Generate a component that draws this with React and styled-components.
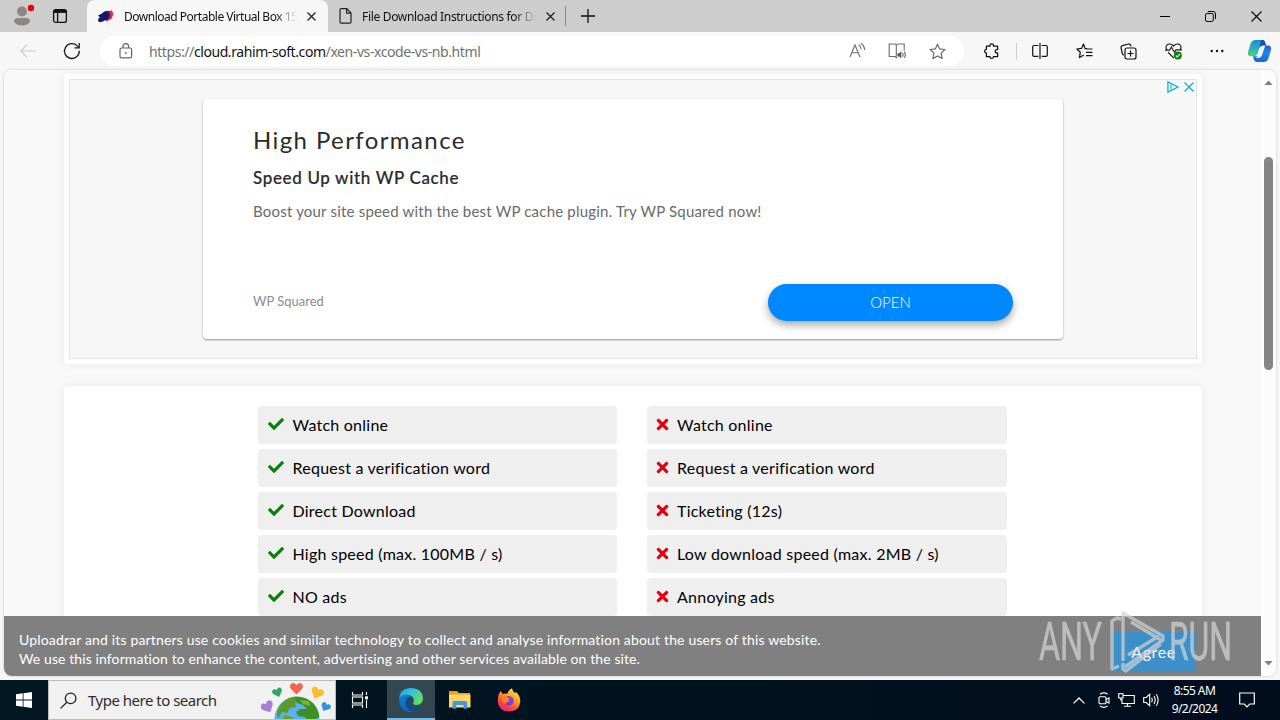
import React from 'react'
import styled, { createGlobalStyle } from 'styled-components'
import { FaCheck, FaTimes } from 'react-icons/fa'

const fast = [
    'Watch online',
    'Request a verification word',
    'Direct Download',
    'High speed (max. 100MB / s)',
    'NO ads',
]
const slow = [
    'Watch online',
    'Request a verification word',
    'Ticketing (12s)',
    'Low download speed (max. 2MB / s)',
    'Annoying ads',
]

function App() {
    return (
    <Desktop>
        <GlobalStyle />
        <TabBar />
        <Toolbar />
        <PageFrame>
            <Page>
                <AdCard />
                <CompareCard />
            </Page>
            <Scrollbar>
                <Arrow viewBox="0 0 10 6"><path d="M0 6L5 0.5L10 6Z" /></Arrow>
                <Thumb />
                <Arrow viewBox="0 0 10 6"><path d="M0 0L5 5.5L10 0Z" /></Arrow>
            </Scrollbar>
            <CookieBar />
        </PageFrame>
        <Taskbar />
    </Desktop>
    )
}

export default App

function TabBar() {
    return (
    <TabStrip>
        <StripIcons>
            <Icon $w={24} $h={24} viewBox="0 0 24 24">
                <circle cx="12" cy="7.5" r="5" fill="#8b8785" />
                <path d="M4 17.5Q4 14 8 14H16Q20 14 20 17.5Q18 21.5 12 21.5Q6 21.5 4 17.5Z" fill="#8b8785" />
                <circle cx="21" cy="4" r="3.2" fill="#e3000b" />
            </Icon>
            <Icon $w={16} $h={16} viewBox="0 0 16 16" fill="none" stroke="#111" strokeWidth="1.3">
                <rect x="1.6" y="1.6" width="12.8" height="12.8" rx="2.2" />
                <path d="M1.6 3.4H14.4" strokeWidth="3" />
                <path d="M5.6 4V14" />
            </Icon>
        </StripIcons>
        <Tab $active>
            <Icon $w={17} $h={15} viewBox="0 0 17 15">
                <path d="M9 2L15 1.5L16.5 5L14.5 10L9 12.5Z" fill="#e0303a" />
                <path d="M1 6.5Q3 5.5 5 4.5Q8 1 11.5 2.5Q13.5 4.5 12.5 8Q11 11.5 7.5 11.5Q4 14 1.5 12.5Q0 10 3 8.5Z" fill="#151574" />
            </Icon>
            <TabTitle $ls={-0.49}>Download Portable Virtual Box 15</TabTitle>
            <CloseIcon />
        </Tab>
        <Tab>
            <Icon $w={13} $h={16} viewBox="0 0 13 16" fill="none" stroke="#222" strokeWidth="1.2">
                <path d="M1 2Q1 .7 2.2 .7H7.8L12 5V14Q12 15.2 10.8 15.2H2.2Q1 15.2 1 14ZM7.6 .9V5.2H11.8" />
            </Icon>
            <TabTitle $ls={-0.32}>File Download Instructions for Do</TabTitle>
            <CloseIcon />
        </Tab>
        <NewTab>
            <Icon $w={14} $h={14} viewBox="0 0 14 14" stroke="#111" strokeWidth="1.3">
                <path d="M7 0V14M0 7H14" />
            </Icon>
        </NewTab>
        <WindowButtons>
            <Icon $w={10} $h={10} viewBox="0 0 10 10" stroke="#000"><path d="M0 5.5H10" /></Icon>
            <Icon $w={11} $h={11} viewBox="0 0 11 11" fill="none" stroke="#000">
                <rect x=".5" y="2.5" width="7.8" height="8" rx="1.6" />
                <path d="M2.8 .5H8Q10.5 .5 10.5 3V8" />
            </Icon>
            <Icon $w={11} $h={11} viewBox="0 0 11 11" stroke="#000" strokeWidth="1.1"><path d="M.5 .5L10.5 10.5M10.5 .5L.5 10.5" /></Icon>
        </WindowButtons>
    </TabStrip>
    )
}

function CloseIcon() {
    return (
        <Icon $w={9} $h={9} viewBox="0 0 9 9" stroke="#222" strokeWidth="1.3">
            <path d="M.5 .5L8.5 8.5M8.5 .5L.5 8.5" />
        </Icon>
    )
}

function Toolbar() {
    return (
    <Bar>
        <NavIcons>
            <Icon $w={16} $h={14} viewBox="0 0 16 14" fill="none" stroke="#cbcbcb" strokeWidth="1.2">
                <path d="M7 .7L.9 7L7 13.3M1 7H16" />
            </Icon>
            <Icon $w={18} $h={18} viewBox="0 0 18 18" fill="none" stroke="#1b1b1b" strokeWidth="1.3">
                <path d="M16.3 8.8A7.4 7.4 0 1 1 14.2 3.9L16 5.6" />
                <path d="M16.2 1V5.8H11.4" />
            </Icon>
        </NavIcons>
        <Address>
            <Icon $w={14} $h={17} viewBox="0 0 14 17" fill="none" stroke="#666" strokeWidth="1.2">
                <rect x="1" y="5" width="11.6" height="9.9" rx="1.6" />
                <path d="M4 5V3.4Q4 .6 6.8 .6Q9.6 .6 9.6 3.4V5" />
                <circle cx="6.8" cy="10" r=".9" fill="#666" stroke="none" />
            </Icon>
            <Url>https://<b>cloud.rahim-soft.com</b>/xen-vs-xcode-vs-nb.html</Url>
            <AddressIcons>
                <Icon $w={17} $h={16} viewBox="0 0 17 16" fill="none" stroke="#6b6b6b" strokeWidth="1.1">
                    <path d="M1 14L6 2L11 14M2.8 9.8H9.2" />
                    <path d="M9.8 1.7Q12 3.1 12.2 6.5M11.8 .3Q15.3 2.3 15.6 7" />
                </Icon>
                <Icon $w={19} $h={16} viewBox="0 0 19 16" fill="none" stroke="#6b6b6b" strokeWidth="1.1">
                    <path d="M8.3 13.6V2.2Q8 1 6.8 1H1.2V13.5H7L8.3 14.8L9.2 14M8.3 2.2Q8.7 1 10 1H16.2V7.5" />
                    <path d="M9.5 10.2H11.2L13.3 8V15.6L11.2 13.4H9.5Z" fill="#555" stroke="none" />
                    <path d="M14.6 9.8Q15.6 11.8 14.6 13.8M16.4 8.6Q18.3 11.8 16.4 15" />
                </Icon>
                <Icon $w={17} $h={17} viewBox="0 0 17 17" fill="none" stroke="#666" strokeWidth="1.15" strokeLinejoin="round">
                    <path d="M8.5 1.2L10.7 5.9L15.9 6.5L12.1 10.1L13.1 15.5L8.5 12.9L3.9 15.5L4.9 10.1L1.1 6.5L6.3 5.9Z" />
                </Icon>
            </AddressIcons>
        </Address>
        <Actions>
            <Icon $w={16} $h={16} viewBox="0 0 16 16" fill="none" stroke="#111" strokeWidth="1.25" strokeLinejoin="round">
                <path d="M2.4 5V3.2H6Q5.6 .9 7.7 .9Q9.8 .9 9.4 3.2H13.6V6.7Q11.2 6.3 11.2 8.3Q11.2 10.3 13.6 9.9V13.7H9.4Q9.6 15.3 7.7 15.3Q5.8 15.3 6 13.7H2.4V10.1Q.6 10 .6 8.1Q.6 6.4 2.4 6.3Z" />
            </Icon>
            <Rule />
            <Icon $w={16} $h={16} viewBox="0 0 16 16" fill="none" stroke="#111" strokeWidth="1.2">
                <path d="M6.3 2.5H2Q.7 2.5 .7 3.8V12Q.7 13.4 2 13.4H6.3M9.7 2.5H14Q15.3 2.5 15.3 3.8V12Q15.3 13.4 14 13.4H9.7M8 0V16" />
            </Icon>
            <Icon $w={17} $h={16} viewBox="0 0 17 16" fill="none" stroke="#111" strokeWidth="1.2" strokeLinejoin="round">
                <path d="M11 5.6L9 5.4L7.5 1L5.5 5.4L.8 6L4.3 9.3L3.4 14.6L7.8 12M10 6H16.5M10 9.3H16.5M10 12.6H16.5" />
            </Icon>
            <Icon $w={17} $h={17} viewBox="0 0 17 17" fill="none" stroke="#111" strokeWidth="1.2">
                <rect x="5" y="5" width="11" height="11" rx="2" />
                <path d="M10.5 7.5V13.5M7.5 10.5H13.5M3.8 12.2Q2.6 11.8 2.2 10L1 4.6Q.8 3 2.4 2.6L8.5 1Q10.5 .7 11.2 3.4" />
            </Icon>
            <Icon $w={18} $h={17} viewBox="0 0 18 17" fill="none" stroke="#222" strokeWidth="1.2">
                <path d="M2 7Q-.3 3.2 2.7 1.4Q6 .1 8.5 3Q11 .1 14.3 1.4Q17.3 3.2 15 7M0 7.2H4.6L6.4 4L9.4 9.2L11 6.8H17M3 9.3L8.8 15" />
                <circle cx="12.8" cy="12.4" r="4" fill="#107c10" stroke="none" />
                <path d="M10.8 12.5L12.2 14L15 11" stroke="#cfeacf" />
            </Icon>
            <Dots viewBox="0 0 14 4">
                <circle cx="1.7" cy="2" r="1.2" /><circle cx="7" cy="2" r="1.2" /><circle cx="12.3" cy="2" r="1.2" />
            </Dots>
            <Copilot />
        </Actions>
    </Bar>
    )
}

function Copilot() {
    return (
        <Icon $w={25} $h={24} viewBox="0 0 25 24">
            <defs>
                <linearGradient id="cpA" x1="0" y1="0" x2="0" y2="1">
                    <stop offset="0" stopColor="#1b8ad8" /><stop offset=".6" stopColor="#31b5b0" /><stop offset="1" stopColor="#52cf7c" />
                </linearGradient>
                <linearGradient id="cpB" x1="0" y1="0" x2="0" y2="1">
                    <stop offset="0" stopColor="#2a5fc9" /><stop offset=".5" stopColor="#1e87e5" /><stop offset="1" stopColor="#1b62dc" />
                </linearGradient>
            </defs>
            <path d="M8.5 1H15Q17.5 1 18.3 4L19 6.5H15.5Q13 6.5 12 10L10.6 14.5Q9.8 17.3 7 17.3H3.8Q.3 17.3 1 13L3.7 4.5Q5 1 8.5 1Z" fill="url(#cpA)" />
            <path d="M14 1H15.5Q17.7 1 18.4 4L19 6.5H15.5Q13.5 6.5 12.5 9Z" fill="#1d4fa8" />
            <path d="M17.5 6.5H21Q25 6.7 24 11L21.3 19.5Q20 23 16.7 23H10Q7.5 23 6.6 20L6 17.3H9Q12 17.3 13 14L14.5 9.2Q15.3 6.5 17.5 6.5Z" fill="url(#cpB)" />
            <path d="M15.3 6.7H18.2L14.8 16.6Q14 19 11.4 19H8.6Q11 18 12 14.8Z" fill="#eaf6ff" />
        </Icon>
    )
}

function AdCard() {
    return (
    <Card $h={290}>
        <AdSlot>
            <AdBox>
                <AdTitle>High Performance</AdTitle>
                <AdSub>Speed Up with WP Cache</AdSub>
                <AdText>Boost your site speed with the best WP cache plugin. Try WP Squared now!</AdText>
                <AdFooter>
                    <Advertiser>WP Squared</Advertiser>
                    <OpenButton>OPEN</OpenButton>
                </AdFooter>
            </AdBox>
            <AdChoices>
                <Icon $w={12} $h={12} viewBox="0 0 12 12" fill="none" stroke="#18b0cd" strokeWidth="1.3">
                    <path d="M.9 .9L11 6L.9 11.2Z" />
                    <path d="M4 3.6V8.8" strokeWidth="1.1" />
                </Icon>
                <Icon $w={10} $h={10} viewBox="0 0 10 10" stroke="#18b0cd" strokeWidth="1.4">
                    <path d="M.5 .5L9.5 9.5M9.5 .5L.5 9.5" />
                </Icon>
            </AdChoices>
        </AdSlot>
    </Card>
    )
}

function CompareCard() {
    return (
    <Card $h={300}>
        <Columns>
            <List>
                {fast.map((text) => <Row key={text} $good><FaCheck size={16} /><span>{text}</span></Row>)}
            </List>
            <List>
                {slow.map((text) => <Row key={text}><FaTimes size={17} /><span>{text}</span></Row>)}
            </List>
        </Columns>
    </Card>
    )
}

function CookieBar() {
    return (
    <Cookies>
        <CookieText>
            <CookieLine $ls={0.16}>Uploadrar and its partners use cookies and similar technology to collect and analyse information about the users of this website.</CookieLine>
            <CookieLine $ls={0.1}>We use this information to enhance the content, advertising and other services available on the site.</CookieLine>
        </CookieText>
        <Agree>Agree</Agree>
        <Watermark viewBox="0 0 200 72">
            <g fill="#d6d6d6" stroke="#d6d6d6" strokeWidth=".7" fontFamily="Roboto, sans-serif" fontSize="54">
                <text x="4" y="51" textLength="63" lengthAdjust="spacingAndGlyphs">ANY</text>
                <text x="134" y="51" textLength="63" lengthAdjust="spacingAndGlyphs">RUN</text>
            </g>
            <g fill="none" stroke="#d3d3d3" strokeWidth="3.4" strokeLinejoin="round">
                <path d="M86 10L82 9L77 12V60L84 57" />
                <path d="M88 52V4L128 27V31L90 58" />
                <path d="M96 13L126 31M93 46L124 27M126 35L91 62L88 60V54" />
            </g>
        </Watermark>
    </Cookies>
    )
}

function Taskbar() {
    return (
    <Tasks>
        <Start>
            <Icon $w={16} $h={16} viewBox="0 0 16 16" fill="#fff">
                <path d="M0 2.3L6.7 1.3V7.5H0ZM7.5 1.2L16 0V7.5H7.5ZM0 8.4H6.7V14.7L0 13.7ZM7.5 8.4H16V16L7.5 14.8Z" />
            </Icon>
        </Start>
        <Search>
            <Icon $w={17} $h={17} viewBox="0 0 17 17" fill="none" stroke="#222" strokeWidth="1.3">
                <circle cx="10.6" cy="6.4" r="5.3" /><path d="M6.8 10.2L.6 16.4" />
            </Icon>
            <span>Type here to search</span>
            <Earth />
        </Search>
        <TaskItem $w={51} $pad={3}>
            <Icon $w={18} $h={16} viewBox="0 0 18 16" fill="none" stroke="#fff" strokeWidth="1.1">
                <path d="M1.5 0V3H11.5V0M1.5 16V13H11.5V16M15.5 0V3M15.5 8V16" />
                <rect x="1.5" y="5" width="10" height="6" /><path d="M14 5.8H17" strokeWidth="3" />
            </Icon>
        </TaskItem>
        <TaskItem $w={48} $active>
            <Icon $w={26} $h={26} viewBox="0 0 26 26">
                <defs>
                    <linearGradient id="edA" x1="0" y1="0" x2="1" y2=".4"><stop offset="0" stopColor="#1b9de2" /><stop offset=".5" stopColor="#2fc2df" /><stop offset="1" stopColor="#5fdc65" /></linearGradient>
                    <linearGradient id="edB" x1="0" y1="0" x2="1" y2="1"><stop offset="0" stopColor="#1282d5" /><stop offset="1" stopColor="#0c59a4" /></linearGradient>
                </defs>
                <path d="M1 12Q2 1 13 1Q24 1 25 11Q25 17.5 18.5 18Q14 17.8 15.5 15.2Q17 10 11.5 8.2Q5 6.5 1 12Z" fill="url(#edA)" />
                <path d="M1 12Q3.5 7.8 9 8Q12 8.3 13.5 10Q9.5 11 10 15Q11 21.5 17.5 21.5Q21 21.5 23 19.5Q20 25 13.5 25Q1.5 25 1 12Z" fill="url(#edB)" />
                <path d="M9 11Q6 16 9 20.5Q11 23.8 15 24.7Q20.5 24 23 19.5Q20 21.5 16.5 21Q10.5 19.5 10 14.5Q10 12 13 10.3Q10.5 9.4 9 11Z" fill="#11498c" />
            </Icon>
        </TaskItem>
        <TaskItem $w={49}>
            <Icon $w={22} $h={18} viewBox="0 0 22 18">
                <path d="M0 0H8L10 2H21V6H0Z" fill="#e8a317" />
                <rect x="0" y="3.5" width="21.5" height="13" fill="#ffd667" />
                <path d="M3.5 17.7V11.5Q3.5 10 5 10H16.7Q18.2 10 18.2 11.5V17.7H14.5V14H7.2V17.7Z" fill="#3c9be0" />
            </Icon>
        </TaskItem>
        <TaskItem $w={49}>
            <Icon $w={24} $h={24} viewBox="0 0 24 24">
                <defs>
                    <linearGradient id="ffA" x1=".8" y1="0" x2=".2" y2="1"><stop offset="0" stopColor="#fff13c" /><stop offset=".4" stopColor="#ff9b1c" /><stop offset=".75" stopColor="#ff3b47" /><stop offset="1" stopColor="#e6208a" /></linearGradient>
                </defs>
                <path d="M3.3 3L6 6Q8 5 10.3 5.7Q11.5 2 15 .3Q15.4 3.4 18 5.2L18.7 3.8Q23.5 8 23.3 13.5Q22.5 23.3 12 23.6Q1.3 23.2.7 13Q.7 7 3.3 3Z" fill="url(#ffA)" />
                <path d="M8 9Q12.5 6.5 16 10Q18.2 15 13.5 17.5Q9 18.5 7 14.5Q9 15.6 11 14L13 12Q9.5 12 8 9Z" fill="#7a3fe0" />
                <path d="M6 6.5Q9 6.5 10 9Q11 10 13 10.5L10 12.5Q7.5 14 9.4 16.3Q5 14.5 5.5 10Z" fill="#ff8a25" />
            </Icon>
        </TaskItem>
        <Tray>
            <Icon $w={12} $h={7} viewBox="0 0 12 7" fill="none" stroke="#fff" strokeWidth="1.3"><path d="M.6 6.4L6 1L11.4 6.4" /></Icon>
            <Icon $w={12} $h={16} viewBox="0 0 12 16" fill="none" stroke="#fff" strokeWidth="1.1">
                <rect x="1" y="4.8" width="7" height="7" rx="1" /><path d="M8 7.5L11 6V11L8 9.4M2 2.2Q5.8-.5 9.6 2.2M2 14Q5.8 16.7 9.6 14" />
            </Icon>
            <Icon $w={17} $h={14} viewBox="0 0 17 14" fill="none" stroke="#fff" strokeWidth="1.1">
                <path d="M5 2.5H16.3V10.5H4V6M9.5 10.5V13M6 13.3H13" /><rect x=".7" y=".7" width="4.3" height="4.3" /><path d="M2.8 5V7H4" />
            </Icon>
            <Icon $w={17} $h={14} viewBox="0 0 17 14" fill="none" stroke="#fff" strokeWidth="1.1">
                <path d="M.7 4.5H3.2L6.7 1.2V12.8L3.2 9.5H.7ZM8.7 4.8Q10 7 8.7 9.2M11 3Q13.4 7 11 11M13.3 1.2Q17 7 13.3 12.8" />
            </Icon>
            <Clock><div>8:55 AM</div><div>9/2/2024</div></Clock>
            <Icon $w={16} $h={16} viewBox="0 0 16 16" fill="none" stroke="#fff" strokeWidth="1.2">
                <path d="M.7 1H15.3V12H10.7L8 14.8L5.3 12H.7Z" />
            </Icon>
        </Tray>
    </Tasks>
    )
}

function Earth() {
    return (
        <EarthArt viewBox="0 0 72 38">
            <defs>
                <path id="heart" d="M0 5.5L-5 .5Q-7-2.5-4.5-4.5Q-2-5.8 0-3Q2-5.8 4.5-4.5Q7-2.5 5 .5Z" />
                <clipPath id="globe"><circle cx="36" cy="38" r="22.5" /></clipPath>
            </defs>
            <circle cx="36" cy="38" r="22.5" fill="#5bb0f2" />
            <g clipPath="url(#globe)">
                <path d="M16 31Q21 17 33 15L38 19L34 22L35 26L29 27L26 32L21 31L17 38Z" fill="#5a9b28" />
                <path d="M33 15L51 18L61 34L55 38H45L44 36L37 35L35 31L39 28L46 28L42 24L36 22Z" fill="#3f8f24" />
                <path d="M23 34L31 36L33 38H22Z" fill="#6aa02f" />
                <path d="M39 19L48 20L49 25L42 23Z" fill="#7fb43c" />
            </g>
            <use href="#heart" transform="translate(35.5 7.5) scale(1.1)" fill="#f2654f" />
            <use href="#heart" transform="translate(16.5 11.5) rotate(-20) scale(.85)" fill="#2fa866" />
            <use href="#heart" transform="translate(56 12) rotate(25) scale(1.08)" fill="#fbbd2f" />
            <use href="#heart" transform="translate(6.5 26) rotate(-28) scale(1.1)" fill="#a77fd6" />
            <use href="#heart" transform="translate(64.5 26) rotate(28) scale(.84)" fill="#2f96dd" />
        </EarthArt>
    )
}

const GlobalStyle = createGlobalStyle`
body{
    margin: 0;
    overflow: hidden;
}
*{
    box-sizing: border-box;
}
`;
const Desktop = styled.div`
    width: 1280px;
    height: 720px;
    display: flex;
    flex-direction: column;
    overflow: hidden;
    background: #f7f7f7;
    font-family: 'Noto Sans', 'Open Sans', sans-serif;
`;
const Icon = styled.svg`
    width: ${(p) => p.$w}px;
    height: ${(p) => p.$h}px;
    flex: none;
    display: block;
    overflow: visible;
`;
const TabStrip = styled.div`
    height: 32px;
    flex: none;
    display: flex;
    background: #cdcdcd;
`;
const StripIcons = styled.div`
    width: 87px;
    display: flex;
    align-items: center;
    gap: 18px;
    padding-left: 10px;
`;
const Tab = styled.div`
    width: ${(p) => (p.$active ? 241 : 237)}px;
    display: flex;
    align-items: center;
    gap: 10px;
    padding: 0 ${(p) => (p.$active ? '12px 0 10px' : '10px 0 11px')};
    border-radius: 8px 8px 0 0;
    background: ${(p) => (p.$active ? '#f7f7f7' : 'transparent')};
`;
const TabTitle = styled.div`
    flex: 1;
    overflow: hidden;
    white-space: nowrap;
    font-size: 12px;
    letter-spacing: ${(p) => p.$ls}px;
    color: #111;
    mask-image: linear-gradient(90deg, #000 88%, rgba(0, 0, 0, 0.3) 96%, transparent 100%);
`;
const NewTab = styled.div`
    height: 20px;
    margin-top: 6px;
    padding-left: 15px;
    display: flex;
    align-items: center;
    border-left: 1px solid #888;
`;
const WindowButtons = styled.div`
    margin-left: auto;
    display: flex;
    align-items: center;
    gap: 35px;
    padding-right: 18px;
`;
const Bar = styled.div`
    height: 38px;
    flex: none;
    display: flex;
    align-items: center;
    background: #f7f7f7;
`;
const NavIcons = styled.div`
    width: 100px;
    display: flex;
    align-items: center;
    gap: 27px;
    padding-left: 20px;
`;
const Address = styled.div`
    width: 864px;
    height: 30px;
    display: flex;
    align-items: center;
    padding: 0 18px 0 19px;
    border-radius: 15px;
    background: #fff;
`;
const Url = styled.div`
    flex: 1;
    margin-left: 16px;
    font-size: 14px;
    letter-spacing: -0.42px;
    color: #707070;
    b{
        font-weight: 400;
        color: #111;
    }
`;
const AddressIcons = styled.div`
    display: flex;
    align-items: center;
    gap: 22px;
`;
const Actions = styled.div`
    flex: 1;
    display: flex;
    align-items: center;
    gap: 27.5px;
    padding-left: 20px;
`;
const Rule = styled.div`
    width: 1px;
    height: 17px;
    flex: none;
    margin: 0 -12px;
    background: #cfcfcf;
`;
const Dots = styled.svg`
    width: 14px;
    height: 4px;
    flex: none;
    margin-right: -5px;
    fill: #111;
`;
const PageFrame = styled.div`
    position: relative;
    width: 1272px;
    height: 606px;
    flex: none;
    margin: 0 4px;
    display: flex;
    overflow: hidden;
    border-radius: 8px;
    background: #f8f8f8;
    box-shadow: 0 0 3px rgba(0, 0, 0, 0.2);
`;
const Page = styled.div`
    width: 1257px;
    display: flex;
    flex-direction: column;
    gap: 22px;
    padding: 4px 59px 0 60px;
    background: #f8f8f8;
`;
const Card = styled.div`
    height: ${(p) => p.$h}px;
    flex: none;
    padding: 5px;
    border-radius: 4px;
    background: #fff;
    box-shadow: 0 0 8px rgba(0, 0, 0, 0.06);
`;
const AdSlot = styled.div`
    position: relative;
    height: 280px;
    padding: 19px 0 0 133px;
    border: 1px solid #e4e4e4;
    background: #f7f7f7;
`;
const AdBox = styled.div`
    width: 860px;
    height: 240px;
    padding: 25px 50px 0;
    border-radius: 4px;
    background: #fff;
    box-shadow: 0 1px 2px rgba(0, 0, 0, 0.4);
    font-family: Lato, sans-serif;
`;
const AdTitle = styled.div`
    font-size: 24px;
    line-height: 32px;
    letter-spacing: 1.4px;
    color: #2b2b2b;
`;
const AdSub = styled.div`
    margin-top: 10px;
    font-size: 17px;
    line-height: 24px;
    letter-spacing: 0.65px;
    font-weight: 500;
    color: #2b2b2b;
    -webkit-text-stroke: 0.2px #2b2b2b;
`;
const AdText = styled.div`
    margin-top: 10px;
    font-size: 15px;
    line-height: 22px;
    letter-spacing: 0.2px;
    color: #6a6a6a;
`;
const AdFooter = styled.div`
    margin-top: 62px;
    display: flex;
    align-items: center;
    justify-content: space-between;
`;
const Advertiser = styled.div`
    padding-bottom: 3px;
    font-size: 13px;
    color: #8c8c8c;
`;
const OpenButton = styled.div`
    width: 245px;
    height: 37px;
    border-radius: 19px;
    background: #0088ff;
    box-shadow: 0 4px 9px rgba(0, 0, 0, 0.35);
    color: #fff;
    font-size: 15px;
    font-weight: 300;
    line-height: 36px;
    text-align: center;
`;
const AdChoices = styled.div`
    position: absolute;
    top: 1px;
    right: 2px;
    display: flex;
    align-items: center;
    gap: 5px;
`;
const Columns = styled.div`
    display: flex;
    justify-content: center;
    gap: 30px;
    padding: 15px 2px 0 0;
`;
const List = styled.div`
    width: 359.5px;
    display: flex;
    flex-direction: column;
    gap: 5px;
`;
const Row = styled.div`
    height: 38px;
    display: flex;
    align-items: center;
    padding: 0 0 2px ${(p) => (p.$good ? 10 : 7)}px;
    border-radius: 4px;
    background: #efefef;
    color: #000;
    font-family: Lato, sans-serif;
    font-size: 16px;
    letter-spacing: 0.24px;
    svg{
        color: ${(p) => (p.$good ? '#0a800a' : '#e3000f')};
    }
    span{
        margin-left: ${(p) => (p.$good ? 9 : 6)}px;
    }
`;
const Scrollbar = styled.div`
    width: 15px;
    display: flex;
    flex-direction: column;
    align-items: center;
    padding: 10px 0;
    background: #fcfcfc;
`;
const Arrow = styled.svg`
    width: 9px;
    height: 5px;
    fill: #808080;
`;
const Thumb = styled.div`
    width: 9px;
    height: 213px;
    margin: 72px 0 auto;
    border-radius: 5px;
    background: #858585;
`;
const Cookies = styled.div`
    position: absolute;
    left: 0;
    bottom: 0;
    width: 1257px;
    height: 60px;
    display: flex;
    justify-content: space-between;
    padding: 16px 65px 4px 15px;
    background: #808080;
    font-family: Lato, sans-serif;
`;
const CookieText = styled.div`
    color: #fff;
    font-size: 14px;
    line-height: 19px;
    margin-top: -2px;
`;
const CookieLine = styled.div`
    white-space: nowrap;
    letter-spacing: ${(p) => p.$ls}px;
`;
const Agree = styled.div`
    width: 85px;
    height: 40px;
    background: #3c8fc8;
    color: #fff;
    font-size: 16px;
    line-height: 40px;
    letter-spacing: 0.6px;
    text-align: center;
`;
const Watermark = styled.svg`
    position: absolute;
    left: 1031px;
    top: -7px;
    width: 200px;
    height: 72px;
    opacity: 0.7;
    overflow: visible;
`;
const Tasks = styled.div`
    height: 40px;
    flex: none;
    margin-top: 4px;
    display: flex;
    background: linear-gradient(90deg, #011722, #01121f 60%, #010c1c);
    color: #fff;
`;
const Start = styled.div`
    width: 48px;
    display: flex;
    align-items: center;
    justify-content: center;
`;
const Search = styled.div`
    width: 288px;
    display: flex;
    align-items: center;
    padding-left: 11px;
    border: 1px solid #bdbdbd;
    background: #f1f1f1;
    color: #2c2c2c;
    font-size: 15px;
    letter-spacing: -0.5px;
    span{
        margin-left: 11px;
        margin-right: auto;
    }
`;
const EarthArt = styled.svg`
    width: 72px;
    height: 38px;
    margin-right: 2px;
`;
const TaskItem = styled.div`
    width: ${(p) => p.$w}px;
    padding-right: ${(p) => p.$pad || 0}px;
    display: flex;
    align-items: center;
    justify-content: center;
    background: ${(p) => (p.$active ? '#334750' : 'transparent')};
    box-shadow: ${(p) => (p.$active ? 'inset 0 -2px 0 #76b9ed' : 'none')};
`;
const Tray = styled.div`
    margin-left: auto;
    display: flex;
    align-items: center;
    gap: 8px;
    padding-right: 25px;
    svg:first-child{
        margin-right: 5px;
    }
`;
const Clock = styled.div`
    width: 57px;
    margin: 0 8px 0 -2px;
    font-size: 12px;
    line-height: 18px;
    letter-spacing: -0.55px;
    text-align: center;
    white-space: nowrap;
`;
